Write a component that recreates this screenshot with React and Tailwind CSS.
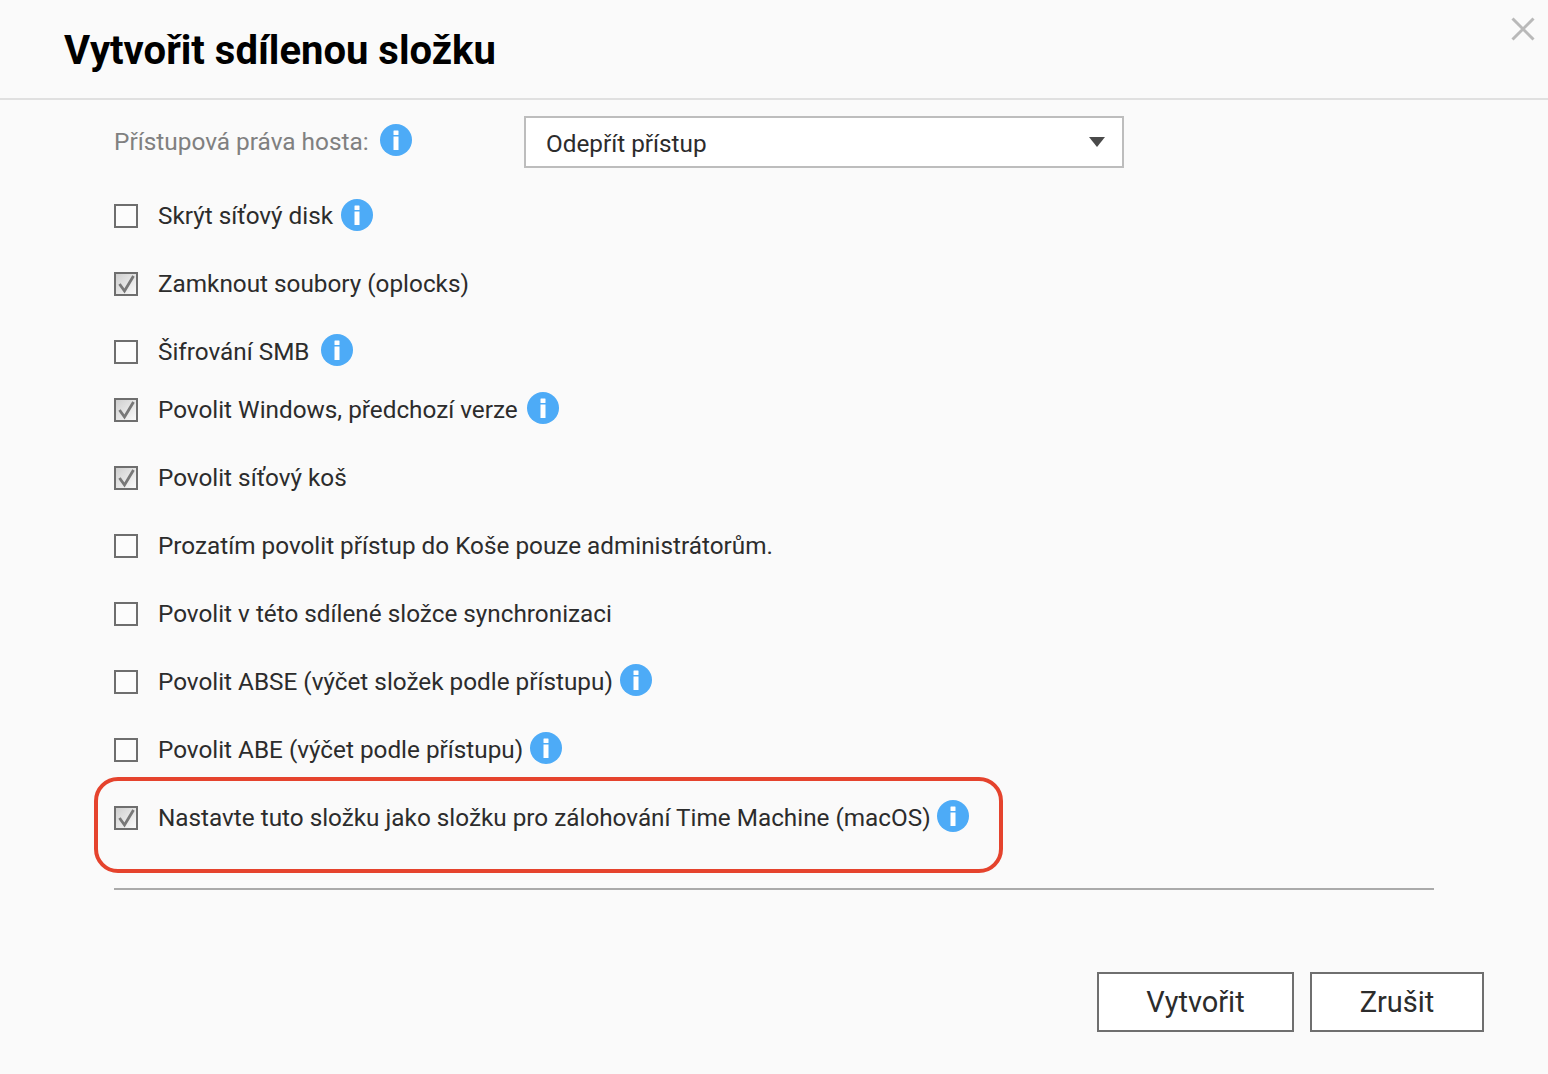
import React from "react";

const rows = [
  { label: "Skrýt síťový disk", info: true, gap: "ml-[8px] -mt-[1px]", mt: "mt-[30px]" },
  { label: "Zamknout soubory (oplocks)", checked: true, mt: "mt-[34px]" },
  { label: "Šifrování SMB", info: true, gap: "ml-[11px] -mt-[3px]", mt: "mt-[34px]" },
  { label: "Povolit Windows, předchozí verze", checked: true, info: true, gap: "ml-[9px] -mt-[3px]", mt: "mt-[24px]" },
  { label: "Povolit síťový koš", checked: true, mt: "mt-[34px]" },
  { label: "Prozatím povolit přístup do Koše pouze administrátorům.", mt: "mt-[34px]" },
  { label: "Povolit v této sdílené složce synchronizaci", mt: "mt-[34px]" },
  { label: "Povolit ABSE (výčet složek podle přístupu)", info: true, gap: "ml-[7px] -mt-[3px]", mt: "mt-[34px]" },
  { label: "Povolit ABE (výčet podle přístupu)", info: true, gap: "ml-[7px] -mt-[3px]", mt: "mt-[34px]" },
  { label: "Nastavte tuto složku jako složku pro zálohování Time Machine (macOS)", checked: true, info: true, gap: "ml-[6px] -mt-[3px]", mt: "mt-[34px]" },
];

function InfoIcon({ className }) {
  return (
    <svg width="32" height="32" viewBox="0 0 32 32" className={`shrink-0 ${className || ""}`}>
      <circle cx="16" cy="16" r="16" fill="#4dabf7" />
      <rect x="13.5" y="6.5" width="5" height="4.5" rx="0.5" fill="#fff" />
      <rect x="13.5" y="12.5" width="5" height="13.5" fill="#fff" />
    </svg>
  );
}

function Checkbox({ checked }) {
  return (
    <span
      className={`relative w-6 h-6 shrink-0 mt-[1px] border-2 border-[#6e6e6e] ${
        checked ? "bg-gradient-to-br from-[#cfcfcf] to-[#fafafa]" : "bg-[#fcfcfc]"
      }`}
    >
      {checked && (
        <svg width="20" height="20" viewBox="0 0 20 20" className="absolute inset-0">
          <path d="M3.5 10 L8.5 17 L17.5 2" fill="none" stroke="#787878" strokeWidth="2.8" />
        </svg>
      )}
    </span>
  );
}

function App() {
  return (
    <div className="relative w-[1548px] h-[1074px] overflow-hidden bg-[#fafafa] text-[#2c2c2c] font-['Roboto',sans-serif]">
      <header className="relative h-[100px] border-b-2 border-[#e0e0e0] pl-16 pt-[26px]">
        <h1 className="text-[40px] leading-[50px] font-bold text-black">Vytvořit sdílenou složku</h1>
        <svg width="24" height="24" viewBox="0 0 24 24" className="absolute right-[13px] top-[17px]">
          <path d="M1.5 1.5 L22.5 22.5 M22.5 1.5 L1.5 22.5" stroke="#b9b9b9" strokeWidth="3" />
        </svg>
      </header>

      <main className="pl-[114px] pr-[114px]">
        <div className="flex items-center mt-4 h-[52px]">
          <div className="w-[410px] flex items-center">
            <span className="text-[24.4px] text-[#808080]">Přístupová práva hosta:</span>
            <InfoIcon className="ml-[11px] -mt-[3px]" />
          </div>
          <div className="w-[600px] h-[52px] flex items-center justify-between border-2 border-[#bdbdbd] bg-white pl-5 pr-[17px]">
            <span className="text-[24.3px] mt-[4px]">Odepřít přístup</span>
            <svg width="16" height="10" viewBox="0 0 16 10">
              <path d="M0 0 H16 L8 10 Z" fill="#4a4a4a" />
            </svg>
          </div>
        </div>

        {rows.map((row) => (
          <div key={row.label} className={`flex items-center h-[34px] ${row.mt}`}>
            <Checkbox checked={row.checked} />
            <span className="ml-5 text-[24.3px] whitespace-nowrap mt-[2px]">{row.label}</span>
            {row.info && <InfoIcon className={row.gap} />}
          </div>
        ))}

        <div className="mt-[54px] h-[2px] bg-[#aaaaaa]" />

        <div className="flex justify-end gap-4 mt-[82px] -mr-[50px]">
          <button className="w-[197px] h-[60px] border-2 border-[#6f6f6f] bg-white text-[29px] pt-[2px]">Vytvořit</button>
          <button className="w-[174px] h-[60px] border-2 border-[#6f6f6f] bg-white text-[29px] pt-[2px]">Zrušit</button>
        </div>
      </main>

      {/* red highlight drawn over the screenshot */}
      <div className="absolute left-[94px] top-[777px] w-[909px] h-[96px] border-4 border-[#e5432d] rounded-[24px]" />
    </div>
  );
}

export default App;
